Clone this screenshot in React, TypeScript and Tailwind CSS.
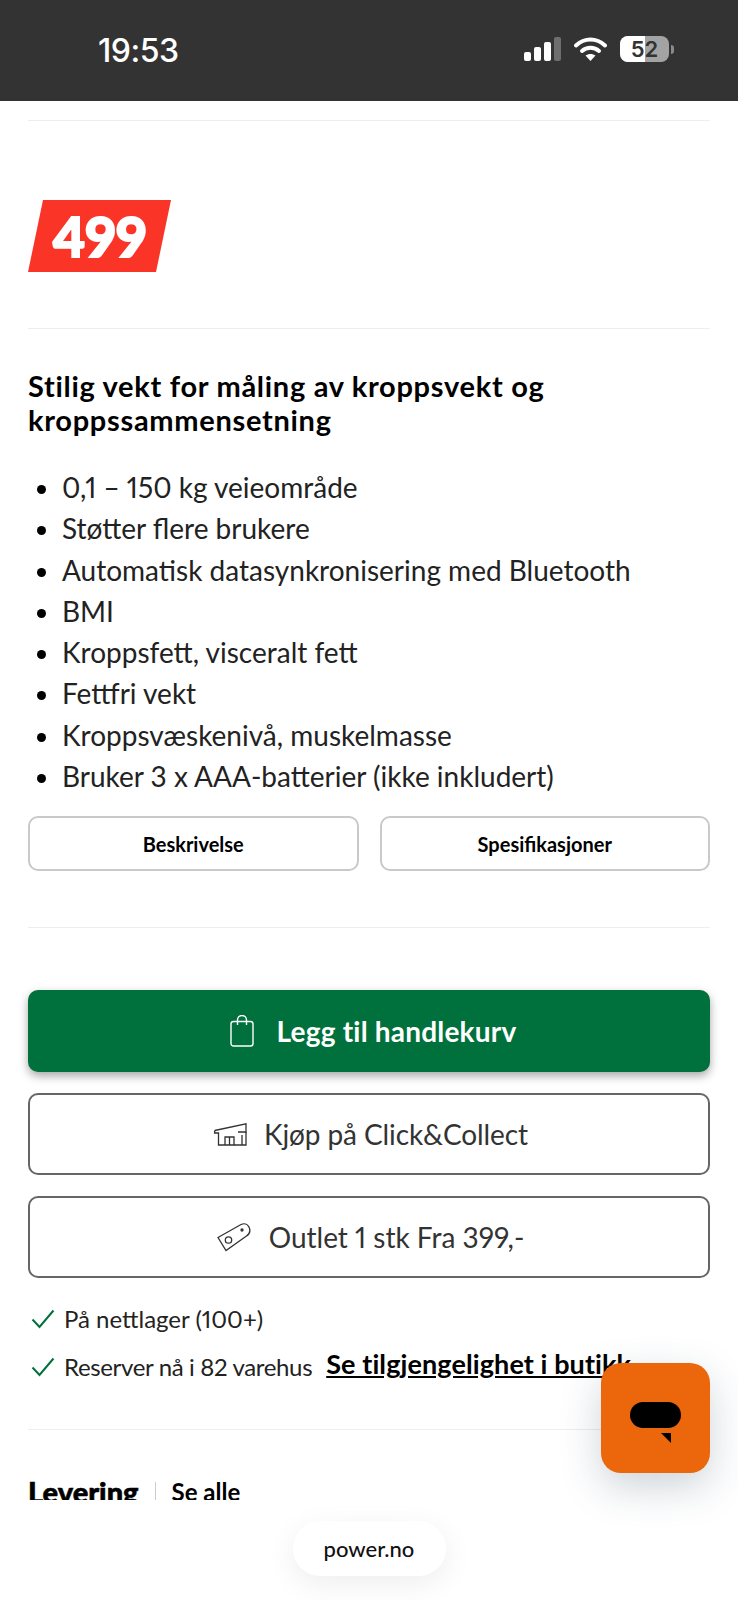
const font = "font-['Lato','Liberation_Sans',sans-serif]";

const bullets = [
  "0,1 – 150 kg veieområde",
  "Støtter flere brukere",
  "Automatisk datasynkronisering med Bluetooth",
  "BMI",
  "Kroppsfett, visceralt fett",
  "Fettfri vekt",
  "Kroppsvæskenivå, muskelmasse",
  "Bruker 3 x AAA-batterier (ikke inkludert)",
];

function StatusBar() {
  return (
    <header className="flex h-[101px] shrink-0 items-start justify-between bg-[#333333] pt-[33px] pl-[98px] pr-[64px] text-white">
      <span className="font-['Inter',sans-serif] text-[32px] leading-[36px] font-medium tracking-[-0.5px]">19:53</span>
      <div className="flex items-center gap-[13px] pt-[3px]">
        <svg width="37" height="24" viewBox="0 0 37 24">
          <rect x="0" y="15" width="7" height="9" rx="2" fill="#fff" />
          <rect x="10" y="10" width="7" height="14" rx="2" fill="#fff" />
          <rect x="20" y="5" width="7" height="19" rx="2" fill="#fff" />
          <rect x="30" y="0" width="7" height="24" rx="2" fill="#6e6e6e" />
        </svg>
        <svg width="33" height="24" viewBox="0 0 33 24">
          <path d="M2 8.5C10.5 0.5 22.5 0.5 31 8.5" fill="none" stroke="#fff" strokeWidth="4" strokeLinecap="round" />
          <path d="M8 14C12.8 9.8 20.2 9.8 25 14" fill="none" stroke="#fff" strokeWidth="4" strokeLinecap="round" />
          <path d="M16.5 24L11.5 18.6C14.4 16.5 18.6 16.5 21.5 18.6Z" fill="#fff" />
        </svg>
        <div className="flex items-center gap-[2px]">
          <div className="relative h-[26px] w-[49px] overflow-hidden rounded-[8px] bg-[#a3a3a3]">
            <div className="h-full w-[25px] bg-white" />
            <span className="absolute inset-0 flex items-center justify-center font-['Inter',sans-serif] text-[22px] font-semibold text-[#333333]">52</span>
          </div>
          <div className="h-[9px] w-[3px] rounded-r-full bg-[#8a8a8a]" />
        </div>
      </div>
    </header>
  );
}

function PriceTag() {
  return (
    <div className="flex h-[72px] w-[143px] items-center justify-center bg-[#fa3527] [clip-path:polygon(15px_0,100%_0,128px_100%,0_100%)]">
      <span className="text-[55px] leading-none font-black text-white [-webkit-text-stroke:2px_white]">499</span>
    </div>
  );
}

function BagIcon() {
  return (
    <svg width="24" height="32" viewBox="0 0 24 32" fill="none" stroke="#fff" strokeWidth="1.4">
      <rect x="1" y="6.5" width="22" height="24.5" rx="2.5" />
      <path d="M7.5 10V5a4.5 4.5 0 0 1 9 0v5" />
    </svg>
  );
}

function StoreIcon() {
  return (
    <svg width="33" height="23" viewBox="0 0 33 23" fill="none" stroke="#333" strokeWidth="1.3">
      <path d="M0.7 7.5L32 0.8V9H24" />
      <path d="M0.7 7.5V10H4.5V22H11V14H20V22H5" />
      <path d="M15.5 14V22" />
      <path d="M20 22H32V9M28 12V22" />
    </svg>
  );
}

function TagIcon() {
  return (
    <svg width="34" height="29" viewBox="0 0 34 29" fill="none" stroke="#333" strokeWidth="1.3">
      <path d="M1 14.5L24 1.5C27 0.2 30.5 0.8 32 4C33.5 7.5 32.8 11 29.5 13L9 27.5Z" />
      <circle cx="11.5" cy="17" r="3.2" />
      <circle cx="25" cy="7" r="1" fill="#333" />
    </svg>
  );
}

function Check() {
  return (
    <svg width="24" height="20" viewBox="0 0 24 20" fill="none" stroke="#00713d" strokeWidth="2">
      <path d="M1.5 10.5L8.5 18L22.5 1.5" />
    </svg>
  );
}

export default function App() {
  return (
    <div className={`relative flex h-[1600px] w-[738px] flex-col overflow-hidden bg-white text-[#111] proportional-nums ${font}`}>
      <StatusBar />

      <main className="h-[1399px] shrink-0 overflow-hidden px-[28px] pt-[19px]">
        <hr className="border-[#eeeeee]" />
        <div className="pt-[79px] pb-[56px]">
          <PriceTag />
        </div>
        <hr className="border-[#eeeeee]" />

        <h2 className="mt-[40px] text-[29px] leading-[34px] font-bold tracking-[0.7px] text-black">
          Stilig vekt for måling av kroppsvekt og kroppssammensetning
        </h2>

        <ul className="mt-[30px] list-disc pl-[34px] text-[28px] leading-[41.25px] text-[#222] marker:text-black">
          {bullets.map((b) => (
            <li key={b}>{b}</li>
          ))}
        </ul>

        <div className="mt-[19px] grid grid-cols-2 gap-[21px]">
          <button className="h-[55px] rounded-[10px] border-2 border-[#c9c9c9] text-[20px] font-bold text-black">Beskrivelse</button>
          <button className="h-[55px] rounded-[10px] border-2 border-[#c9c9c9] text-[20px] font-bold text-black">Spesifikasjoner</button>
        </div>

        <hr className="mt-[56px] border-[#eeeeee]" />

        <div className="mt-[62px] flex flex-col gap-[21px]">
          <button className="flex h-[82px] items-center justify-center gap-[23px] rounded-[10px] bg-[#00713d] pl-[8px] text-[28px] font-bold tracking-[0.2px] text-white shadow-[0_4px_10px_rgba(0,0,0,0.35)]">
            <BagIcon />
            Legg til handlekurv
          </button>
          <button className="flex h-[82px] items-center justify-center gap-[17px] rounded-[10px] border-2 border-[#666666] pl-[4px] text-[28px] tracking-[-0.1px] text-[#333]">
            <StoreIcon />
            Kjøp på Click&amp;Collect
          </button>
          <button className="flex h-[82px] items-center justify-center gap-[18px] rounded-[10px] border-2 border-[#666666] pl-[3px] text-[28px] text-[#333]">
            <TagIcon />
            Outlet 1 stk Fra 399,-
          </button>
        </div>

        <div className="mt-[26px] flex items-center gap-[9px] pl-[3px] text-[24px] leading-[30px] text-[#222]">
          <Check />
          På nettlager (100+)
        </div>
        <div className="mt-[18px] flex items-center gap-[9px] pl-[3px] text-[24px] leading-[30px] text-[#222]">
          <Check />
          <span className="tracking-[-0.35px]">Reserver nå i 82 varehus</span>
          <a className="-mt-[6px] ml-[5px] whitespace-nowrap text-[27px] font-bold tracking-[0.1px] text-black underline">Se tilgjengelighet i butikk</a>
        </div>

        <hr className="mt-[47px] border-[#eeeeee]" />

        <div className="mt-[44px] flex items-center leading-[36px] text-black">
          <span className="text-[29px] font-black [-webkit-text-stroke:0.6px_black]">Levering</span>
          <span className="mx-[16px] h-[20px] w-px bg-[#cccccc]" />
          <span className="text-[24px] font-bold">Se alle</span>
        </div>
      </main>

      <footer className="flex flex-1 items-start justify-center bg-white pt-[21px]">
        <div className="flex h-[55px] w-[153px] items-center justify-center rounded-[27px] bg-white text-[22px] font-medium text-[#111] shadow-[0_8px_30px_rgba(0,0,0,0.07)]">
          power.no
        </div>
      </footer>

      <button className="absolute top-[1363px] left-[601px] flex h-[110px] w-[109px] flex-col items-center rounded-[20px] bg-[#ec660c] pt-[39px] shadow-[0_14px_40px_rgba(30,60,80,0.22)]">
        <span className="h-[26px] w-[51px] rounded-[13px] bg-black" />
        <svg className="mt-[5px] ml-[21px]" width="10" height="10" viewBox="0 0 10 10">
          <path d="M0 0H10V10Z" fill="#000" />
        </svg>
      </button>
    </div>
  );
}
